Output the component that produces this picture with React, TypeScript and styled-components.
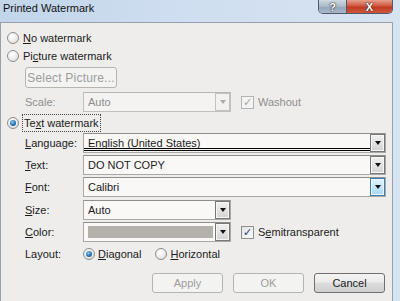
import React from 'react'
import styled, { createGlobalStyle, css } from 'styled-components'

const GlobalStyle = createGlobalStyle`
  html, body {
    margin: 0;
    padding: 0;
    overflow: hidden;
  }
  body {
    width: 400px;
    height: 301px;
    background: linear-gradient(90deg, #c2d5ea 0%, #cfdef0 45%, #d6e3f1 100%);
    font-family: "Liberation Sans", Arial, sans-serif;
    font-size: 11px;
    color: #1b1b1b;
  }
`

const Window = styled.div`
  display: flex;
  flex-direction: column;
  width: 400px;
  height: 301px;
`

const TitleBar = styled.div`
  display: flex;
  align-items: flex-start;
  height: 22px;
  padding-left: 3px;
  padding-right: 7px;
`

const Title = styled.div`
  line-height: 16px;
  color: #111;
`

const Controls = styled.div`
  display: flex;
  margin-left: auto;
  border: 1px solid #4f5b6a;
  border-top: none;
  border-radius: 0 0 5px 5px;
  overflow: hidden;
  height: 13px;
`

const CaptionButton = styled.div<{ $close?: boolean }>`
  display: flex;
  align-items: center;
  justify-content: center;
  height: 13px;
  color: #fff;
  font-weight: bold;
  font-size: 11px;
  text-shadow: 0 0 2px #333, 0 0 1px #000;
  ${(p) =>
    p.$close
      ? css`
          width: 45px;
          background: linear-gradient(180deg, #e7a08d 0%, #d0583f 45%, #c13a22 55%, #cc5a3c 100%);
        `
      : css`
          width: 27px;
          border-right: 1px solid #4f5b6a;
          background: linear-gradient(180deg, #cfd8e3 0%, #aab8c8 50%, #94a6bb 55%, #a9b8c9 100%);
        `}
`

const Body = styled.div`
  display: flex;
  flex-direction: column;
  width: 393px;
  flex: 1;
  box-sizing: border-box;
  border: 1px solid #96a1ad;
  border-bottom: none;
  background: #eeedeb;
  padding: 6px 6px 0 6px;
`

const RadioRow = styled.div<{ $indent?: boolean; $top?: number }>`
  display: flex;
  align-items: center;
  gap: 4px;
  height: 18px;
  margin-top: ${(p) => p.$top ?? 0}px;
`

const Radio = styled.span<{ $checked?: boolean }>`
  position: relative;
  width: 12px;
  height: 12px;
  box-sizing: border-box;
  border-radius: 50%;
  border: 1px solid #8d8d8d;
  background: radial-gradient(circle at 40% 35%, #ffffff 0%, #ececec 55%, #cfcfcf 100%);
  flex-shrink: 0;
  ${(p) =>
    p.$checked &&
    css`
      &::after {
        content: '';
        position: absolute;
        left: 2px;
        top: 2px;
        width: 6px;
        height: 6px;
        border-radius: 50%;
        background: radial-gradient(circle at 40% 35%, #8fd0f5 0%, #2a78b8 50%, #0f3f6e 100%);
      }
    `}
`

const Focus = styled.span`
  outline: 1px dotted #444;
  outline-offset: 0;
  padding: 2px 1px;
`

const Key = styled.span`
  text-decoration: underline;
`

const PushButton = styled.div<{ $width: number; $disabled?: boolean }>`
  display: flex;
  align-items: center;
  justify-content: center;
  width: ${(p) => p.$width}px;
  height: 20px;
  box-sizing: border-box;
  border-radius: 3px;
  ${(p) =>
    p.$disabled
      ? css`
          border: 1px solid #b4b4b2;
          background: #f3f3f2;
          color: #9c9c9c;
        `
      : css`
          border: 1px solid #707070;
          background: linear-gradient(180deg, #f3f3f3 0%, #ebebeb 45%, #dddddd 50%, #cfcfcf 100%);
          color: #1b1b1b;
        `}
`

const SelectButton = styled(PushButton)`
  margin-left: 18px;
  margin-top: 2px;
  height: 21px;
  font-size: 12px;
  letter-spacing: 0.2px;
`

const FieldRow = styled.div<{ $top: number; $height?: number }>`
  display: flex;
  align-items: center;
  height: ${(p) => p.$height ?? 20}px;
  margin-top: ${(p) => p.$top}px;
  margin-left: 18px;
`

const Label = styled.div<{ $disabled?: boolean }>`
  width: 58px;
  color: ${(p) => (p.$disabled ? '#8e8e8e' : '#1b1b1b')};
`

const Combo = styled.div<{ $short?: boolean; $disabled?: boolean }>`
  display: flex;
  align-self: stretch;
  box-sizing: border-box;
  ${(p) => (p.$short ? 'width: 148px;' : 'flex: 1;')}
  border: 1px solid ${(p) => (p.$disabled ? '#c2c0bd' : '#a9a8a6')};
  border-top-color: ${(p) => (p.$disabled ? '#b8b6b3' : '#8f8e8c')};
  background: ${(p) => (p.$disabled ? '#f4f3f2' : '#f9f8f7')};
`

const Field = styled.div<{ $disabled?: boolean; $underline?: boolean }>`
  display: flex;
  align-items: center;
  flex: 1;
  padding-left: 4px;
  color: ${(p) => (p.$disabled ? '#8b8b8b' : '#1b1b1b')};
  ${(p) =>
    p.$underline &&
    css`
      border-bottom: 3px double #000;
      margin-bottom: 1px;
      padding-top: 3px;
    `}
`

const Swatch = styled.div`
  flex: 1;
  margin: 3px 2px 3px 4px;
  background: #b4b1ad;
`

const DropButton = styled.div<{ $hot?: boolean; $disabled?: boolean }>`
  display: flex;
  align-items: center;
  justify-content: center;
  width: 15px;
  box-sizing: border-box;
  ${(p) =>
    p.$hot
      ? css`
          border: 1px solid #3c7fb1;
          box-shadow: inset 0 0 0 1px #e9f6fd;
          background: linear-gradient(180deg, #e3f3fc 0%, #c5e5f8 50%, #a9d6f2 100%);
        `
      : p.$disabled
      ? css`
          border: 1px solid #c4c2bf;
          background: #f2f1f0;
        `
      : css`
          border: 1px solid #777;
          box-shadow: inset 0 0 0 1px #f7f7f7;
          background: linear-gradient(180deg, #f0f0f0 0%, #e3e3e3 50%, #d3d3d3 100%);
        `}

  &::after {
    content: '';
    border-left: 3px solid transparent;
    border-right: 3px solid transparent;
    border-top: 4px solid ${(p) => (p.$disabled ? '#a9a9a9' : '#111')};
  }
`

const Check = styled.span<{ $disabled?: boolean }>`
  display: flex;
  align-items: center;
  justify-content: center;
  width: 13px;
  height: 13px;
  box-sizing: border-box;
  margin-left: 10px;
  margin-right: 4px;
  border: 1px solid ${(p) => (p.$disabled ? '#b3b3b3' : '#8e8f8f')};
  background: ${(p) =>
    p.$disabled ? '#f4f4f4' : 'linear-gradient(135deg, #e4e4e4 0%, #fafafa 100%)'};
  color: ${(p) => (p.$disabled ? '#a6a6a6' : '#1e3f7c')};
  font-family: "DejaVu Sans", sans-serif;
  font-size: 11px;
  font-weight: bold;
  line-height: 1;
`

const CheckText = styled.span<{ $disabled?: boolean }>`
  color: ${(p) => (p.$disabled ? '#8e8e8e' : '#1b1b1b')};
`

const OptionGroup = styled.div`
  display: flex;
  align-items: center;
  gap: 3px;
  margin-right: 14px;
`

const ButtonRow = styled.div`
  display: flex;
  justify-content: flex-end;
  gap: 10px;
  margin-top: 10px;
  padding-right: 1px;
`

export default function App() {
  return (
    <>
      <GlobalStyle />
      <Window>
        <TitleBar>
          <Title>Printed Watermark</Title>
          <Controls>
            <CaptionButton>?</CaptionButton>
            <CaptionButton $close>X</CaptionButton>
          </Controls>
        </TitleBar>
        <Body>
          <RadioRow>
            <Radio />
            <span><Key>N</Key>o watermark</span>
          </RadioRow>
          <RadioRow>
            <Radio />
            <span>Pi<Key>c</Key>ture watermark</span>
          </RadioRow>
          <SelectButton $width={92} $disabled>Select Picture...</SelectButton>
          <FieldRow $top={4}>
            <Label $disabled>Scale:</Label>
            <Combo $short $disabled>
              <Field $disabled>Auto</Field>
              <DropButton $disabled />
            </Combo>
            <Check $disabled>✓</Check>
            <CheckText $disabled>Washout</CheckText>
          </FieldRow>
          <RadioRow $top={2}>
            <Radio $checked />
            <Focus>Te<Key>x</Key>t watermark</Focus>
          </RadioRow>
          <FieldRow $top={1}>
            <Label><Key>L</Key>anguage:</Label>
            <Combo>
              <Field $underline>English (United States)</Field>
              <DropButton />
            </Combo>
          </FieldRow>
          <FieldRow $top={2}>
            <Label><Key>T</Key>ext:</Label>
            <Combo>
              <Field>DO NOT COPY</Field>
              <DropButton />
            </Combo>
          </FieldRow>
          <FieldRow $top={2}>
            <Label><Key>F</Key>ont:</Label>
            <Combo>
              <Field>Calibri</Field>
              <DropButton $hot />
            </Combo>
          </FieldRow>
          <FieldRow $top={3}>
            <Label><Key>S</Key>ize:</Label>
            <Combo $short>
              <Field>Auto</Field>
              <DropButton />
            </Combo>
          </FieldRow>
          <FieldRow $top={2}>
            <Label><Key>C</Key>olor:</Label>
            <Combo $short>
              <Swatch />
              <DropButton />
            </Combo>
            <Check>✓</Check>
            <CheckText>S<Key>e</Key>mitransparent</CheckText>
          </FieldRow>
          <FieldRow $top={3} $height={18}>
            <Label>Layout:</Label>
            <OptionGroup>
              <Radio $checked />
              <span><Key>D</Key>iagonal</span>
            </OptionGroup>
            <OptionGroup>
              <Radio />
              <span><Key>H</Key>orizontal</span>
            </OptionGroup>
          </FieldRow>
          <ButtonRow>
            <PushButton $width={71} $disabled>Apply</PushButton>
            <PushButton $width={71} $disabled>OK</PushButton>
            <PushButton $width={71}>Cancel</PushButton>
          </ButtonRow>
        </Body>
      </Window>
    </>
  )
}
